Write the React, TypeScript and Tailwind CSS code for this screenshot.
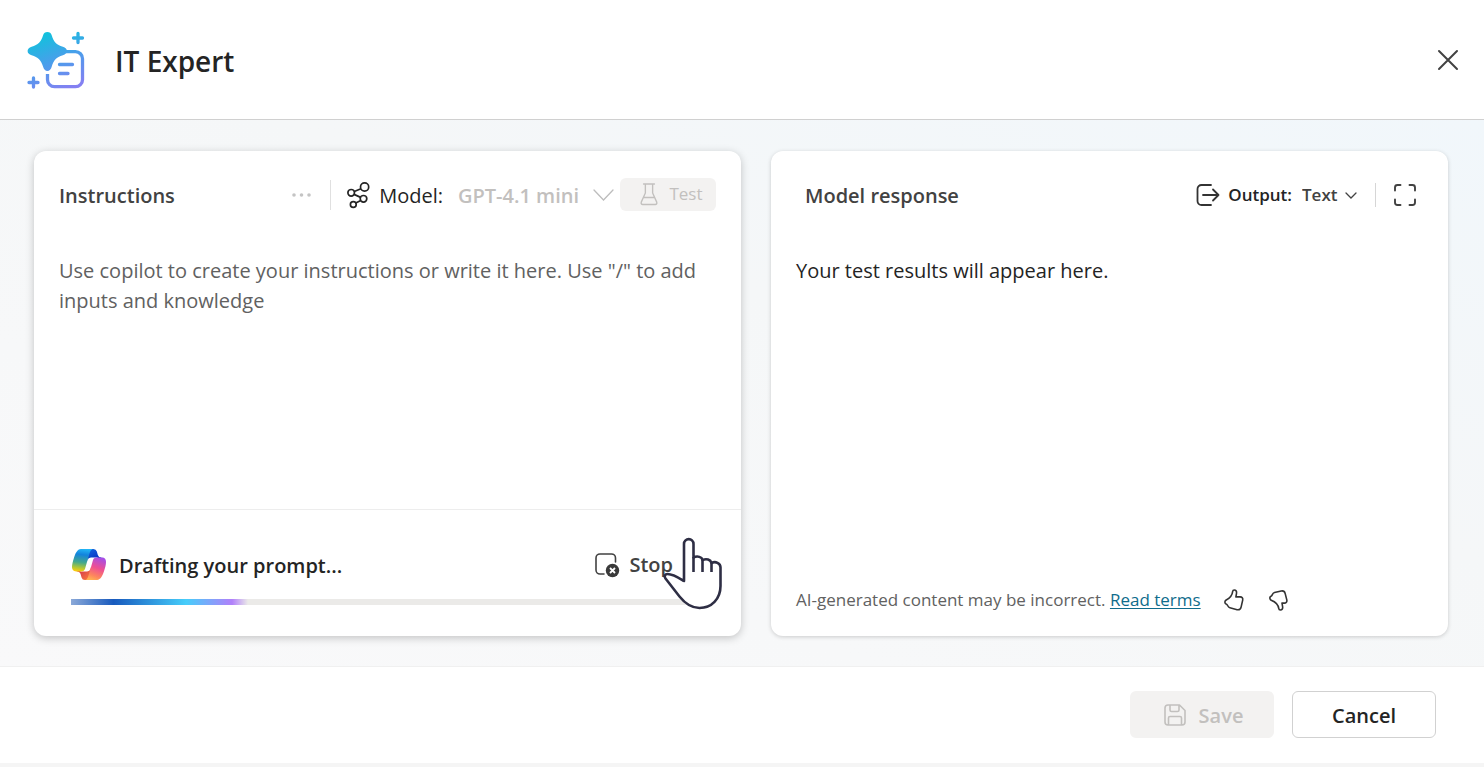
import React from "react";

function AppLogo() {
  return (
    <svg width="60" height="60" viewBox="0 0 60 60" fill="none" aria-hidden="true">
      <defs>
        <linearGradient id="logo" x1="20" y1="2" x2="42" y2="58" gradientUnits="userSpaceOnUse">
          <stop offset="0" stopColor="#10c2dc" />
          <stop offset="0.5" stopColor="#4a9eeb" />
          <stop offset="1" stopColor="#8480f2" />
        </linearGradient>
      </defs>
      <path
        d="M20.400 2c2.200 0 3.600 1.100 4.300 3.200 1.900 6.600 4.600 9.600 11.200 11.500 2.600.8 4.100 2.300 4.100 4.300s-1.500 3.400-4.100 4.200c-6.600 1.900-9.300 4.900-11.200 11.500-.7 2.600-2.300 4.300-4.300 4.300s-3.600-1.700-4.300-4.300c-1.900-6.600-5-9.600-11.500-11.500C2 24.400.6 23 .6 21s1.400-3.500 4-4.300c6.500-1.900 9.600-4.900 11.500-11.500.7-2.100 2.100-3.200 4.300-3.200Z"
        fill="url(#logo)"
      />
      <path
        d="M44 21.700h4.500a7 7 0 0 1 7 7v21a7 7 0 0 1-7 7H27.500a7 7 0 0 1-7-7V46"
        stroke="url(#logo)"
        strokeWidth="3.300"
      />
      <path
        d="M32.500 34.500h13M32.500 43.500h8.500M51 3.500v9M46.500 8h9M6.500 48v9M2 52.500h9"
        stroke="url(#logo)"
        strokeWidth="3.300"
        strokeLinecap="round"
      />
      <path d="M39 21.700h5M20.500 44v2" stroke="url(#logo)" strokeWidth="3.300" />
    </svg>
  );
}

function CopilotLogo() {
  return (
    <svg width="34" height="31" viewBox="0 0 24 22" preserveAspectRatio="none" aria-hidden="true">
      <defs>
        <linearGradient id="cpA" x1="17" y1="7" x2="13" y2="0" gradientUnits="userSpaceOnUse">
          <stop offset="0" stopColor="#0a35c4" />
          <stop offset="1" stopColor="#1263dd" />
        </linearGradient>
        <linearGradient id="cpB" x1="6" y1="16" x2="12" y2="22" gradientUnits="userSpaceOnUse">
          <stop offset="0" stopColor="#d9404c" />
          <stop offset="1" stopColor="#fb7a3c" />
        </linearGradient>
        <linearGradient id="cpC" x1="8" y1="0" x2="6" y2="16" gradientUnits="userSpaceOnUse">
          <stop offset="0" stopColor="#22b5f5" />
          <stop offset="0.250" stopColor="#1383dc" />
          <stop offset="0.600" stopColor="#45a98c" />
          <stop offset="0.850" stopColor="#b5c833" />
          <stop offset="1" stopColor="#fccb0e" />
        </linearGradient>
        <linearGradient id="cpD" x1="20" y1="6" x2="14" y2="22" gradientUnits="userSpaceOnUse">
          <stop offset="0" stopColor="#a44ee8" />
          <stop offset="0.450" stopColor="#ee4f93" />
          <stop offset="0.800" stopColor="#fd855e" />
          <stop offset="1" stopColor="#ffb152" />
        </linearGradient>
      </defs>
      <path fill="url(#cpA)" d="M17.533 1.829A2.528 2.528 0 0015.110 0h-.737a2.531 2.531 0 00-2.484 2.087l-1.263 6.937.314-1.080a2.528 2.528 0 012.424-1.833h4.284l1.797.706 1.731-.706h-.505a2.528 2.528 0 01-2.423-1.829l-.715-2.453z" />
      <path fill="url(#cpB)" d="M6.726 20.160A2.528 2.528 0 009.152 22h1.566c1.370 0 2.490-1.100 2.525-2.480l.170-6.690-.357 1.228a2.528 2.528 0 01-2.423 1.830h-4.320l-1.540-.842-1.667.843h.497c1.124 0 2.113.750 2.426 1.840l.697 2.432z" />
      <path fill="url(#cpC)" d="M15 0H6.252c-2.500 0-4 3.331-5 6.662-1.184 3.947-2.734 9.225 1.750 9.225H6.780c1.130 0 2.120-.753 2.430-1.847.657-2.317 1.809-6.359 2.713-9.436.460-1.563.842-2.906 1.430-3.742A1.970 1.970 0 0115 0" />
      <path fill="url(#cpD)" d="M9 22h8.749c2.500 0 4-3.332 5-6.663 1.183-3.947 2.733-9.225-1.750-9.225H17.220c-1.129 0-2.120.754-2.430 1.848a1149.200 1149.200 0 01-2.713 9.437c-.460 1.563-.842 2.907-1.430 3.743A1.970 1.970 0 019 22" />
    </svg>
  );
}

type ChevronProps = { className: string; width: number; height: number };

function Chevron({ className, width, height }: ChevronProps) {
  return (
    <svg
      className={className}
      width={width}
      height={height}
      viewBox={`0 0 ${width} ${height}`}
      fill="none"
      stroke="currentColor"
      strokeWidth="1.300"
      strokeLinecap="round"
      aria-hidden="true"
    >
      <path d={`M1 1 L${width / 2} ${height - 1} L${width - 1} 1`} />
    </svg>
  );
}

function HandPointer() {
  return (
    <svg
      className="pointer-events-none absolute right-[19px] top-[26px]"
      width="60"
      height="74"
      viewBox="0 0 60 74"
      fill="#fff"
      stroke="#2e2e44"
      strokeWidth="2.600"
      strokeLinecap="butt"
      strokeLinejoin="round"
      aria-hidden="true"
    >
      <path d="M22 45V8c0-6.500 9.500-6.500 9.500 0V21.500c4-2 8.500-.5 9 2.500 4-1.600 8-.5 9 3 4-2 9 0 9 4.500V50c0 13-9 22-21 22-8 0-14-4-20-11.500L3.500 42.500C1.800 40 3 38 5.500 38c5.500 0 10 3 16.500 7Z" />
      <path d="M31.500 21v15M40.500 24v12M49.500 27v9" />
    </svg>
  );
}

export default function App() {
  return (
    <div className="flex min-h-screen flex-col bg-white font-['Open_Sans','Noto_Sans',sans-serif] text-[#242424]">
      <header className="flex h-[120px] items-center border-b border-[#d0d0d0] pl-[27px] pr-6">
        <AppLogo />
        <h1 className="ml-7 mt-0.5 text-[28px] font-semibold leading-10">IT Expert</h1>
        <button type="button" aria-label="Close" className="ml-auto text-[#424242]">
          <svg width="24" height="24" viewBox="0 0 24 24" fill="none" stroke="currentColor" strokeWidth="2" strokeLinecap="round">
            <path d="M3 3l18 18M21 3L3 21" />
          </svg>
        </button>
      </header>

      <main className="grid flex-1 grid-cols-[707fr_677fr] gap-[30px] bg-linear-to-bl from-[#f1f7fb] via-[#f5f7f8] via-40% to-[#f9f9fa] pb-[30px] pl-[34px] pr-9 pt-[31px]">
        <section className="flex flex-col rounded-xl bg-white shadow-[0_2px_8px_rgba(0,0,0,0.22)]">
          <div className="flex h-[88px] items-center pl-[25px] pr-[25px]">
            <h2 className="pt-0.5 text-[20px] font-semibold text-[#424242]">Instructions</h2>
            <button type="button" aria-label="More options" disabled className="ml-auto mr-[18px] text-[#c4c4c4]">
              <svg width="20" height="6" viewBox="0 0 20 6" fill="currentColor">
                <circle cx="2" cy="3" r="1.800" />
                <circle cx="9.500" cy="3" r="1.800" />
                <circle cx="17" cy="3" r="1.800" />
              </svg>
            </button>
            <div className="h-[30px] w-px bg-[#e0e0e0]" />
            <svg className="ml-4 mr-2" width="24" height="28" viewBox="0 0 24 28" fill="none" stroke="#242424" strokeWidth="1.700" aria-hidden="true">
              <circle cx="17.600" cy="6" r="4.100" />
              <circle cx="4.200" cy="11.800" r="3.300" />
              <circle cx="16.500" cy="17.800" r="3.300" />
              <circle cx="6.300" cy="23.500" r="2.900" />
              <path d="M7.300 10.500l6.600-2.700M7 13.400l6.700 3M13.800 19.600l-5 2.500" />
            </svg>
            <label htmlFor="model" className="pt-0.5 text-[20px]">Model:</label>
            <div className="relative ml-[15px] pt-0.5">
              <select id="model" disabled className="w-[162px] appearance-none bg-transparent text-[20px] font-semibold text-[#c2c0be] opacity-100">
                <option>GPT-4.1 mini</option>
              </select>
              <Chevron className="pointer-events-none absolute right-[6px] top-[10px] text-[#bdbdbd]" width={21} height={12} />
            </div>
            <button type="button" disabled className="mb-0.5 flex h-[33px] w-24 items-center justify-center gap-[10px] rounded-md bg-[#f3f2f1] pl-1.5 text-[17px] text-[#c2c0be]">
              <svg width="20" height="24" viewBox="0 0 22 24" preserveAspectRatio="none" fill="none" stroke="currentColor" strokeWidth="1.500" strokeLinecap="round" strokeLinejoin="round" aria-hidden="true">
                <path d="M5 2h12M7 2v9L2.500 20.200c-.5 1.200.2 2.200 1.500 2.200h14c1.300 0 2-1 1.500-2.200L15 11V2M5 15.500h12" />
              </svg>
              Test
            </button>
          </div>

          <textarea
            aria-label="Instructions"
            placeholder={'Use copilot to create your instructions or write it here. Use "/" to add inputs and knowledge'}
            className="mt-[17px] min-h-[120px] flex-1 resize-none bg-transparent px-[25px] text-[20px] leading-[30px] outline-none placeholder:text-[#616161]"
          />

          <div className="relative border-t border-[#ededed] px-[37px] pb-[31px] pt-[38px]">
            <div className="flex h-8 items-center pl-px">
              <CopilotLogo />
              <p className="ml-[13px] mt-1 text-[20px] font-semibold">Drafting your prompt...</p>
              <button type="button" className="ml-auto mr-[31px] mt-0.5 flex items-center gap-[9px] text-[20px] font-semibold text-[#424242]">
                <svg width="26" height="26" viewBox="0 0 26 26" fill="none" aria-hidden="true">
                  <path d="M10 22H6a4 4 0 0 1-4-4V6a4 4 0 0 1 4-4h11.500a4 4 0 0 1 4 4v4" stroke="#424242" strokeWidth="1.600" strokeLinecap="round" />
                  <circle cx="18.500" cy="18.500" r="6.700" fill="#3a3a3a" />
                  <path d="M16 16l5 5M21 16l-5 5" stroke="#fff" strokeWidth="1.800" />
                </svg>
                Stop
              </button>
            </div>
            <div role="progressbar" aria-label="Drafting your prompt" className="mt-[19px] h-[6px] bg-[#ebeae8]">
              <div className="h-full w-[28%] bg-linear-[90deg,#8ba9d8_0%,#185abd_24%,#46cdfa_65%,#b180fa_91%,#ebeae8_100%]" />
            </div>
            <HandPointer />
          </div>
        </section>

        <section className="flex flex-col rounded-xl bg-white shadow-[0_1px_4px_rgba(0,0,0,0.18)]">
          <div className="flex h-[88px] items-center pl-[34px] pr-[31px]">
            <h2 className="pt-0.5 text-[20px] font-semibold text-[#424242]">Model response</h2>
            <svg className="ml-auto mr-2" width="24" height="24" viewBox="0 0 24 24" fill="none" stroke="#333" strokeWidth="1.800" strokeLinecap="round" strokeLinejoin="round" aria-hidden="true">
              <path d="M15 2H5.500A4 4 0 0 0 1.500 6v12a4 4 0 0 0 4 4H15M7 12h15.500M17 6.500l5.500 5.500-5.500 5.500" />
            </svg>
            <label htmlFor="output" className="text-[17px] font-semibold">Output:</label>
            <div className="relative ml-[10px]">
              <select id="output" className="w-[55px] appearance-none bg-transparent text-[17px] font-semibold text-[#424242]">
                <option>Text</option>
              </select>
              <Chevron className="pointer-events-none absolute right-0 top-[10px] text-[#424242]" width={12} height={7} />
            </div>
            <div className="ml-[18px] mr-[17px] h-6 w-px bg-[#d6d6d6]" />
            <button type="button" aria-label="Full screen" className="text-[#424242]">
              <svg width="24" height="24" viewBox="0 0 24 24" fill="none" stroke="currentColor" strokeWidth="1.900" strokeLinecap="round">
                <path d="M2 7.500V4.500A2.500 2.500 0 0 1 4.500 2h3M16.500 2h3A2.500 2.500 0 0 1 22 4.500v3M22 16.500v3a2.500 2.500 0 0 1-2.500 2.500h-3M7.500 22h-3A2.500 2.500 0 0 1 2 19.500v-3" />
              </svg>
            </button>
          </div>

          <p className="mt-[17px] flex-1 px-[25px] text-[20px] leading-[30px]">Your test results will appear here.</p>

          <div className="flex items-center px-[25px] pb-[23px] text-[17px] leading-[26px] text-[#616161]">
            <p>
              AI-generated content may be incorrect.{" "}
              <a href="#terms" className="text-[#0f6c8c] underline underline-offset-2">Read terms</a>
            </p>
            <button type="button" aria-label="Like" className="ml-[22px] text-[#333]">
              <svg width="22" height="24" viewBox="0 0 22 24" fill="none" stroke="currentColor" strokeWidth="1.600" strokeLinejoin="round">
                <path d="M11.200 2c2 0 2.600 1.500 2.300 3.300L12.900 8.900h4.200c2 0 3 1.300 2.600 3.200l-1.600 7c-.5 2-2 3-4 2.600l-7.200-1.900c-1.200-.3-1.800-1.200-2.300-2.300-.4-.9-1-1.300-1.900-1.700-1.400-.7-.9-2.900.5-3.800C7.400 9.800 9.200 7.600 9.700 3.300 9.800 2.500 10.300 2 11.200 2Z" />
              </svg>
            </button>
            <button type="button" aria-label="Dislike" className="ml-[23px] text-[#333]">
              <svg width="22" height="24" viewBox="0 0 22 24" fill="none" stroke="currentColor" strokeWidth="1.600" strokeLinejoin="round">
                <path d="M12.300 22c2 0 2.600-1.500 2.300-3.300L14 15.100h2.200c2 0 3-1.300 2.600-3.200l-1.600-6.300c-.5-2-2-3-4-2.600L6.500 4.500C5.300 4.800 4.700 5.700 4.200 6.800c-.4.900-1 1.300-1.500 1.700-1.400.7-.9 2.900.5 3.800 5 1.900 7.100 4.100 7.600 8.400.1.800.6 1.300 1.500 1.300Z" />
              </svg>
            </button>
          </div>
        </section>
      </main>

      <footer className="flex justify-end gap-[18px] border-b-4 border-t border-b-[#f5f5f5] border-t-[#f0f0f0] pb-[25px] pr-12 pt-6 text-[20px] font-semibold">
        <button type="button" disabled className="flex h-[47px] w-36 items-center justify-center gap-3 rounded-md bg-[#f3f2f1] pl-0.5 text-[#c2c0be]">
          <svg width="24" height="24" viewBox="0 0 24 24" fill="none" stroke="currentColor" strokeWidth="1.600" strokeLinejoin="round" aria-hidden="true">
            <path d="M5 2h11.500L22 7.500V19a3 3 0 0 1-3 3H5a3 3 0 0 1-3-3V5a3 3 0 0 1 3-3ZM7 2v5a1.500 1.500 0 0 0 1.500 1.500h6A1.500 1.500 0 0 0 16 7V2M5.500 22v-7A1.500 1.500 0 0 1 7 13.500h10a1.500 1.500 0 0 1 1.500 1.500v7" />
          </svg>
          <span className="pt-0.5">Save</span>
        </button>
        <button type="button" className="h-[47px] w-36 rounded-md border border-[#d1d1d1] bg-white pt-0.5">Cancel</button>
      </footer>
    </div>
  );
}
